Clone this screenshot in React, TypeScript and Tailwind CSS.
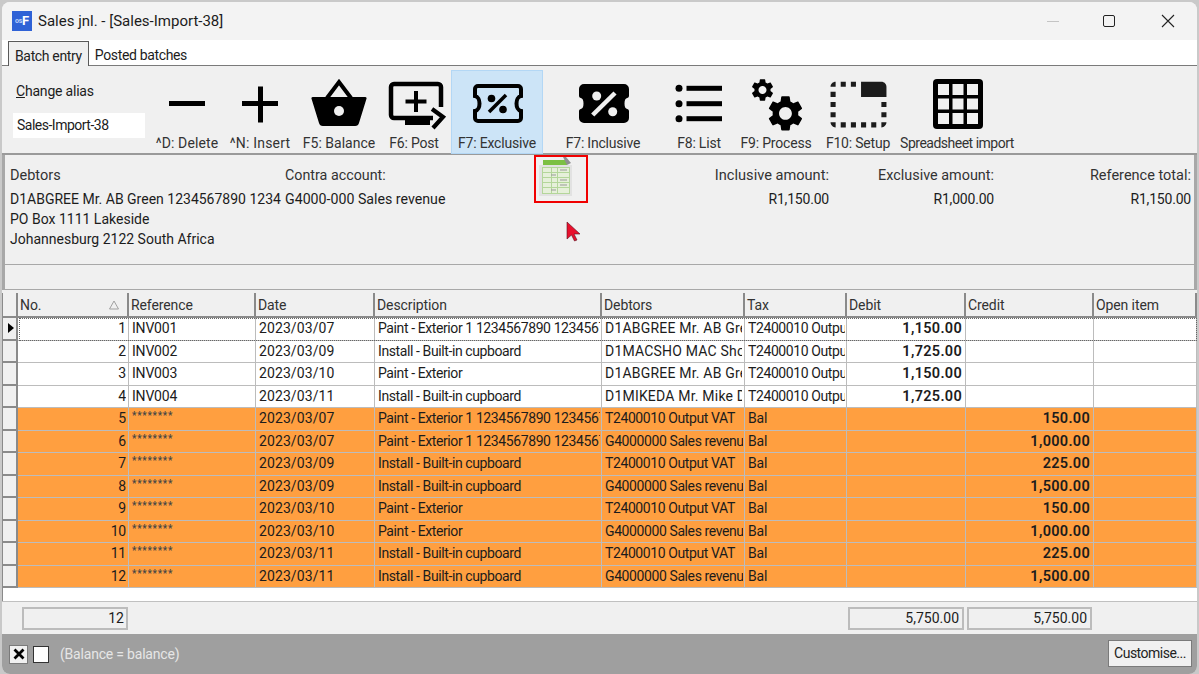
import type { ReactNode } from "react";
import { MdTabUnselected } from "react-icons/md";

const gear =
  "M19.14 12.94c.04-.3.06-.61.06-.94 0-.32-.02-.64-.07-.94l2.03-1.58c.18-.14.23-.41.12-.61l-1.92-3.32c-.12-.22-.37-.29-.59-.22l-2.39.96c-.5-.38-1.03-.7-1.62-.94l-.36-2.54c-.04-.24-.24-.41-.48-.41h-3.84c-.24 0-.43.17-.47.41l-.36 2.54c-.59.24-1.13.57-1.62.94l-2.39-.96c-.22-.08-.47 0-.59.22L2.74 8.87c-.12.21-.08.47.12.61l2.03 1.58c-.05.3-.09.63-.09.94s.02.64.07.94l-2.03 1.58c-.18.14-.23.41-.12.61l1.92 3.32c.12.22.37.29.59.22l2.39-.96c.5.38 1.03.7 1.62.94l.36 2.54c.05.24.24.41.48.41h3.84c.24 0 .44-.17.47-.41l.36-2.54c.59-.24 1.13-.56 1.62-.94l2.39.96c.22.08.47 0 .59-.22l1.92-3.32c.12-.22.07-.47-.12-.61l-2.01-1.58zM12 15.6c-1.98 0-3.6-1.62-3.6-3.6s1.62-3.6 3.6-3.6 3.6 1.62 3.6 3.6-1.62 3.6-3.6 3.6z";

const coupon = "M8 12h40a3 3 0 0 1 3 3v7c-6 1-6 14 0 15v7a3 3 0 0 1-3 3H8a3 3 0 0 1-3-3v-7c6-1 6-14 0-15v-7a3 3 0 0 1 3-3z";

function IconMinus() {
  return (
    <svg width="50" height="60" viewBox="0 0 50 60">
      <rect x="7" y="27" width="36" height="5" fill="#000" />
    </svg>
  );
}

function IconPlus() {
  return (
    <svg width="50" height="60" viewBox="0 0 50 60">
      <rect x="7" y="27" width="36" height="5" fill="#000" />
      <rect x="23" y="12.500" width="5" height="36" fill="#000" />
    </svg>
  );
}

function IconBasket() {
  return (
    <svg width="56" height="60" viewBox="0 0 56 60">
      <path d="M2 23h52a1.500 1.500 0 0 1 1.400 2L48 49a4 4 0 0 1-4 3H12a4 4 0 0 1-4-3L.6 25A1.500 1.500 0 0 1 2 23z" fill="#000" />
      <path d="M16 24 28 8l12 16" fill="none" stroke="#000" strokeWidth="4" />
      <circle cx="28" cy="37" r="5" fill="#f0f0f0" />
    </svg>
  );
}

function IconPost() {
  return (
    <svg width="64" height="60" viewBox="0 0 64 60">
      <path d="M59 33V13a3 3 0 0 0-3-3H12a3 3 0 0 0-3 3v28a3 3 0 0 0 3 3h39" fill="none" stroke="#000" strokeWidth="4.500" />
      <rect x="32" y="17" width="4" height="21" fill="#000" />
      <rect x="23.500" y="25.500" width="21" height="4" fill="#000" />
      <rect x="23" y="46" width="25" height="5" fill="#000" />
      <path d="m50 35 11 8-10 11" fill="none" stroke="#000" strokeWidth="4.200" />
    </svg>
  );
}

function IconCouponOutline() {
  return (
    <svg width="54" height="60" viewBox="0 0 54 60">
      <path d={coupon} fill="none" stroke="#000" strokeWidth="4" />
      <circle cx="21.500" cy="24.500" r="3.800" fill="#000" />
      <circle cx="33" cy="35.500" r="3.800" fill="#000" />
      <path d="M19 38 36 21" stroke="#000" strokeWidth="3.500" />
    </svg>
  );
}

function IconCouponSolid() {
  return (
    <svg width="54" height="60" viewBox="0 0 54 60">
      <path d={coupon} fill="#000" stroke="#000" strokeWidth="4" strokeLinejoin="round" />
      <circle cx="20.700" cy="22" r="4.500" fill="#f0f0f0" />
      <circle cx="36.700" cy="37.700" r="4.500" fill="#f0f0f0" />
      <path d="M16.700 41 39 19" stroke="#f0f0f0" strokeWidth="4.500" />
    </svg>
  );
}

function IconList() {
  return (
    <svg width="50" height="60" viewBox="0 0 50 60">
      {[14.3, 29.7, 44.7].map((y) => (
        <g key={y} fill="#000">
          <circle cx="5" cy={y} r="3.500" />
          <rect x="12.500" y={y - 2.500} width="35.500" height="5" />
        </g>
      ))}
    </svg>
  );
}

function IconGears() {
  return (
    <svg width="54" height="60" viewBox="0 0 54 60">
      <path d={gear} transform="translate(.06 2.560) scale(1.120)" fill="#000" fillRule="evenodd" />
      <path d={gear} transform="translate(15.100 18.100) scale(1.780)" fill="#000" fillRule="evenodd" />
    </svg>
  );
}

function IconSheet() {
  return (
    <svg width="54" height="60" viewBox="0 0 54 60">
      <rect x="3" y="5" width="50" height="50" rx="4" fill="#000" />
      {[8, 22.5, 37].map((x) =>
        [10, 24.5, 39].map((y) => <rect key={`${x}-${y}`} x={x} y={y} width="11" height="11" fill="#f0f0f0" />)
      )}
    </svg>
  );
}

const tools = [
  { label: "^D: Delete", w: "w-[70px]", ls: "tracking-[.1px]", icon: <IconMinus /> },
  { label: "^N: Insert", w: "w-[76px]", ls: "tracking-[.2px]", icon: <IconPlus /> },
  { label: "F5: Balance", w: "w-[82px]", ls: "tracking-[0px]", icon: <IconBasket /> },
  { label: "F6: Post", w: "w-[68px]", ls: "", icon: <IconPost /> },
  { label: "F7: Exclusive", w: "w-[92px] ml-[3px] bg-[#cce4f7] outline outline-1 -outline-offset-1 outline-[#b3d7f5]", ls: "", icon: <IconCouponOutline /> },
  { label: "F7: Inclusive", w: "w-[120px]", ls: "", icon: <IconCouponSolid /> },
  { label: "F8: List", w: "w-[72px]", ls: "", icon: <IconList /> },
  { label: "F9: Process", w: "w-[82px]", ls: "", icon: <IconGears /> },
  { label: "F10: Setup", w: "w-[82px]", ls: "", icon: <MdTabUnselected size={61} /> },
  { label: "Spreadsheet import", w: "w-[116px]", ls: "tracking-[-.5px]", icon: <IconSheet /> },
];

const inv = [
  ["1", "INV001", "2023/03/07", "Paint - Exterior 1 1234567890 1234567890", "D1ABGREE Mr. AB Green", "1,150.00"],
  ["2", "INV002", "2023/03/09", "Install - Built-in cupboard", "D1MACSHO MAC Shop", "1,725.00"],
  ["3", "INV003", "2023/03/10", "Paint - Exterior", "D1ABGREE Mr. AB Green", "1,150.00"],
  ["4", "INV004", "2023/03/11", "Install - Built-in cupboard", "D1MIKEDA Mr. Mike Davis", "1,725.00"],
];

const bal = [
  ["5", "2023/03/07", "Paint - Exterior 1 1234567890 1234567890", "T2400010 Output VAT", "150.00"],
  ["6", "2023/03/07", "Paint - Exterior 1 1234567890 1234567890", "G4000000 Sales revenue", "1,000.00"],
  ["7", "2023/03/09", "Install - Built-in cupboard", "T2400010 Output VAT", "225.00"],
  ["8", "2023/03/09", "Install - Built-in cupboard", "G4000000 Sales revenue", "1,500.00"],
  ["9", "2023/03/10", "Paint - Exterior", "T2400010 Output VAT", "150.00"],
  ["10", "2023/03/10", "Paint - Exterior", "G4000000 Sales revenue", "1,000.00"],
  ["11", "2023/03/11", "Install - Built-in cupboard", "T2400010 Output VAT", "225.00"],
  ["12", "2023/03/11", "Install - Built-in cupboard", "G4000000 Sales revenue", "1,500.00"],
];

const cols = "grid grid-cols-[15px_111px_127px_119px_227px_143px_102px_119px_128px_1fr]";
const headers = ["No.", "Reference", "Date", "Description", "Debtors", "Tax", "Debit", "Credit", "Open item"];

const dateText = "tracking-[.1px]";
const descText = "tracking-[-.4px] -mr-[1px]";
const moneyText = "text-right font-semibold text-[14.5px] tracking-[.3px] pr-[1px]";
const starText = "text-[10px] font-medium tracking-[.7px] leading-[16px] text-[#444]";

function Cell({ children, className = "" }: { children?: ReactNode; className?: string }) {
  return (
    <div className="border-r-[1.5px] border-b-[1.5px] border-[#bcbcbc] pl-[3px] pr-[2px] leading-[21px]">
      <div className={`overflow-hidden whitespace-nowrap ${className}`}>{children}</div>
    </div>
  );
}

function RowMarker({ active }: { active?: boolean }) {
  return (
    <div className="flex items-center justify-center border-r-2 border-b-2 border-[#8a8a8a] bg-[#f0f0f0] pl-[2px]">
      {active && <div className="h-0 w-0 border-y-[5px] border-l-[6px] border-y-transparent border-l-black" />}
    </div>
  );
}

export default function App() {
  return (
    <div className="h-[674px] w-[1199px] overflow-hidden bg-[#c9c9c9] pt-[2px] pl-[2px] pr-[2px] font-['Roboto',sans-serif] text-[14px] tracking-[-.2px] text-[#1c1c1c]">
      <div className="flex h-[672px] flex-col overflow-hidden rounded-lg bg-[#f0f0f0]">
        {/* title bar */}
        <div className="flex h-[38px] shrink-0 items-center bg-[#f3f3f3] pl-[10px]">
          <div className="flex h-5 w-5 items-center justify-center bg-[#2f62d6] text-[13px] font-bold text-white">
            <span className="text-[7px] text-[#bcd0fa]">os</span>F
          </div>
          <div className="ml-[6px] text-[15px] tracking-normal">Sales jnl. - [Sales-Import-38]</div>
          <div className="ml-auto flex items-center">
            <div className="mr-[44px] h-px w-3 bg-[#c4c4c4]" />
            <div className="mr-[46px] h-3 w-3 rounded-[2px] border-[1.5px] border-[#222]" />
            <svg width="14" height="14" viewBox="0 0 14 14" className="mr-[22px]">
              <path d="m1 1 12 12M13 1 1 13" stroke="#222" strokeWidth="1.100" />
            </svg>
          </div>
        </div>

        {/* tabs */}
        <div className="flex h-[26px] shrink-0 items-end border-b border-[#7a7a7a] bg-white pl-[6px] tracking-[-.35px]">
          <div className="z-10 -mb-px flex h-[25px] items-center border-x border-t border-[#5a5a5a] bg-[#f0f0f0] px-[6px] pt-[5px] text-[#222]">
            Batch entry
          </div>
          <div className="flex h-[24px] items-center pt-[5px] pr-[5px] pl-[6px]">Posted batches</div>
        </div>

        {/* toolbar */}
        <div className="flex h-[89px] shrink-0 border-b-[2px] border-[#9a9a9a] pt-[4px]">
          <div className="flex w-[150px] shrink-0 flex-col pl-[11px]">
            <div className="mt-[11px] pl-[3px]">
              <span className="underline">C</span>hange alias
            </div>
            <div className="mt-[11px] flex h-[25px] w-[132px] items-center bg-white pl-[4px] tracking-[-.5px]">Sales-Import-38</div>
          </div>
          {tools.map((t) => (
            <div key={t.label} className={`flex h-[84px] shrink-0 flex-col items-center ${t.w}`}>
              <div className="mt-[4px] flex h-[60px] items-center justify-center">{t.icon}</div>
              <div className={`whitespace-nowrap leading-[18px] text-[#333] ${t.ls}`}>{t.label}</div>
            </div>
          ))}
        </div>

        {/* info panel */}
        <div className="relative flex h-[110px] shrink-0 border-r-[3px] border-b border-l-[3px] border-[#a8a8a8] pt-[10px] pl-[5px] pr-[3px] tracking-normal">
          <div className="w-[275px] shrink-0">
            <div className="h-[24px] text-[14.5px] text-[#333]">Debtors</div>
            <div className="h-[20px] whitespace-nowrap">D1ABGREE Mr. AB Green 1234567890 1234</div>
            <div className="h-[20px]">PO Box 1111 Lakeside</div>
            <div className="h-[20px]">Johannesburg 2122 South Africa</div>
          </div>
          <div className="w-[260px] shrink-0">
            <div className="h-[24px] text-[14.3px] text-[#333]">Contra account:</div>
            <div className="text-[14.2px]">G4000-000 Sales revenue</div>
          </div>
          <div className="w-[284px] shrink-0 text-right">
            <div className="h-[24px] text-[14.6px] text-[#333]">Inclusive amount:</div>
            <div className="tracking-[-.2px]">R1,150.00</div>
          </div>
          <div className="w-[165px] shrink-0 text-right">
            <div className="h-[24px] text-[14.4px] text-[#333]">Exclusive amount:</div>
            <div className="tracking-[-.2px]">R1,000.00</div>
          </div>
          <div className="flex-1 text-right">
            <div className="h-[24px] text-[14.5px] text-[#333]">Reference total:</div>
            <div className="tracking-[-.2px]">R1,150.00</div>
          </div>

          {/* highlighted import icon and pointer */}
          <div className="absolute top-0 left-[529px] h-[48px] w-[54px] border-[2px] border-[#f00000]" />
          <svg width="36" height="40" viewBox="0 0 36 40" className="absolute top-[2px] left-[533px]">
            <rect x="1" y="8" width="33" height="31" fill="#e2e2e2" />
            <rect x="5" y="3" width="24" height="5" fill="#7cc043" />
            <path d="M25 0h3l5 6-4 2z" fill="#8f8f8f" />
            <rect x="4.500" y="10.500" width="27" height="26" fill="#e6f0da" stroke="#b4d69a" />
            <path d="M4 15.500h28M4 20.500h28M4 25.500h28M4 30.500h28M13.500 10v26M19.500 10v26" stroke="#b4d69a" />
            <path d="M22 13h7M13 18h5M22 23h7M22 28h7M13 33h5" stroke="#999" />
          </svg>
          <svg width="16" height="22" viewBox="0 0 16 22" className="absolute top-[66px] left-[561px]">
            <path d="M1 1v17l4.500-4 3 6 2.500-1-3-6h6z" fill="#e8112d" stroke="#5a1020" strokeWidth=".6" />
          </svg>
        </div>

        <div className="h-[25px] shrink-0 border-x-[3px] border-b-[1px] border-[#a8a8a8]" />
        <div className="h-[3px] shrink-0" />

        {/* grid */}
        <div className="h-[308px] shrink-0 border-l border-[#8a8a8a] bg-white">
          <div className={`${cols} h-[25px] bg-[#f0f0f0]`}>
            <div className="border-r-2 border-b-2 border-[#8a8a8a]" />
            {headers.map((h, i) => (
              <div key={h} className="flex items-center justify-between border-r-2 border-b-2 border-[#8a8a8a] px-[2px] pt-[1px] tracking-[-.1px] text-[#333]">
                {h}
                {i === 0 && (
                  <svg width="10" height="10" viewBox="0 0 10 10" className="mr-[6px]">
                    <path d="M5 1 9.500 9H.5z" fill="none" stroke="#a0a0a0" />
                  </svg>
                )}
              </div>
            ))}
          </div>
          {inv.map((r, i) => (
            <div key={r[0]} className={`${cols} relative h-[22.5px] bg-white`}>
              <RowMarker active={i === 0} />
              <Cell className="text-right">{r[0]}</Cell>
              <Cell>{r[1]}</Cell>
              <Cell className={dateText}>{r[2]}</Cell>
              <Cell className={descText}>{r[3]}</Cell>
              <Cell className="tracking-[.2px]">{r[4]}</Cell>
              <Cell className={descText}>T2400010 Output VAT</Cell>
              <Cell className={moneyText}>{r[5]}</Cell>
              <Cell />
              <Cell />
              {i === 0 && <div className="absolute inset-y-0 right-0 left-[16px] border border-dotted border-[#666]" />}
            </div>
          ))}
          {bal.map((r) => (
            <div key={r[0]} className={`${cols} h-[22.5px] bg-[#ff9f40]`}>
              <RowMarker />
              <Cell className="text-right">{r[0]}</Cell>
              <Cell className={starText}>********</Cell>
              <Cell className={dateText}>{r[1]}</Cell>
              <Cell className={descText}>{r[2]}</Cell>
              <Cell className={descText}>{r[3]}</Cell>
              <Cell>Bal</Cell>
              <Cell />
              <Cell className={moneyText}>{r[4]}</Cell>
              <Cell />
            </div>
          ))}
        </div>

        {/* totals */}
        <div className="flex h-[33px] shrink-0 items-center border-t border-[#c0c0c0] tracking-normal">
          <div className="ml-[20px] flex h-[23px] w-[106px] items-center justify-end border-2 border-[#bcbcbc] px-[2px]">12</div>
          <div className="ml-[720px] flex h-[23px] w-[116px] items-center justify-end border-2 border-[#bcbcbc] pr-[3px]">5,750.00</div>
          <div className="ml-[3px] flex h-[23px] w-[125px] items-center justify-end border-2 border-[#bcbcbc] pr-[3px]">5,750.00</div>
        </div>

        {/* status bar */}
        <div className="flex flex-1 items-center bg-[#9f9f9f] pl-[7px] pr-[5px]">
          <div className="flex h-[19px] w-[19px] items-center justify-center border border-[#7a7a7a] bg-[#f0f0f0]">
            <svg width="12" height="12" viewBox="0 0 12 12">
              <path d="m1.500 1.500 9 9M10.500 1.500l-9 9" stroke="#000" strokeWidth="2.800" />
            </svg>
          </div>
          <div className="ml-[5px] h-[17px] w-[16px] border border-[#333] bg-white" />
          <div className="ml-[11px] text-[#e6e6e6]">(Balance = balance)</div>
          <div className="mb-[1px] ml-auto flex h-[27px] w-[84px] items-center justify-center border border-[#7a7a7a] bg-[#f0f0f0] tracking-[-.5px] text-[#222]">
            Customise...
          </div>
        </div>
      </div>
    </div>
  );
}
